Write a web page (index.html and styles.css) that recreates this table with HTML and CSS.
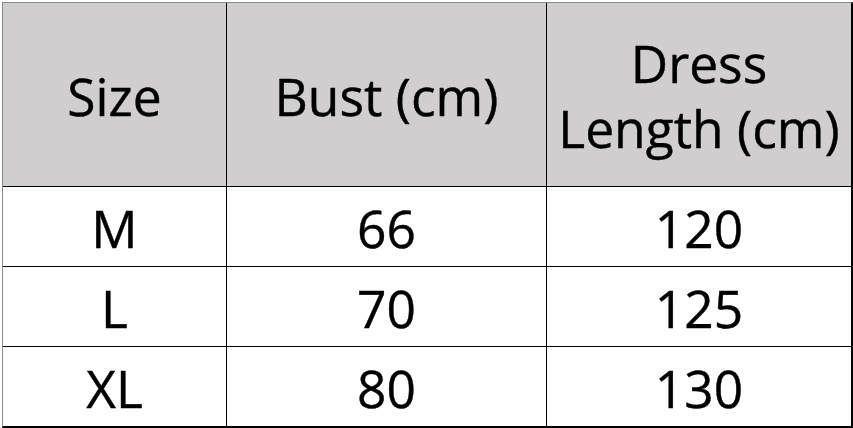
FILE: index.html
```html
<!DOCTYPE html>
<html>
<head>
<meta charset="utf-8">
<link rel="stylesheet" href="styles.css">
</head>
<body>
<div class="chart">
  <div class="cell head">Size</div>
  <div class="cell head">Bust (cm)</div>
  <div class="cell head last-col two-line">Dress<br>Length (cm)</div>
  <div class="cell">M</div>
  <div class="cell">66</div>
  <div class="cell last-col">120</div>
  <div class="cell">L</div>
  <div class="cell">70</div>
  <div class="cell last-col">125</div>
  <div class="cell last-row">XL</div>
  <div class="cell last-row">80</div>
  <div class="cell last-row last-col">130</div>
</div>
</body>
</html>
```
FILE: styles.css
```css
html, body {
  margin: 0;
  padding: 0;
  background: #ffffff;
}
body {
  width: 853px;
  height: 428px;
  overflow: hidden;
  font-family: "Open Sans", "Liberation Sans", sans-serif;
  color: #000;
}
.chart {
  margin: 2px 0 0 2px;
  display: grid;
  grid-template-columns: 224px 320px 304px;
  grid-template-rows: 184px 80px 80px 79px;
  width: fit-content;
  border-top: 1px solid #8a8a8a;
  border-left: 1px solid #8a8a8a;
  border-right: 2px solid #000;
  border-bottom: 2px solid #000;
}
.cell {
  box-sizing: border-box;
  display: flex;
  align-items: center;
  justify-content: center;
  text-align: center;
  font-size: 51.5px;
  line-height: 65px;
  -webkit-text-stroke: 0.4px #000;
  border-right: 1px solid #000;
  border-bottom: 1px solid #000;
  padding-top: 3px;
}
.head {
  background: #d0cece;
  padding-top: 4px;
}
.two-line {
  padding-top: 2px;
}
.last-col {
  border-right: none;
}
.last-row {
  border-bottom: none;
}
```
